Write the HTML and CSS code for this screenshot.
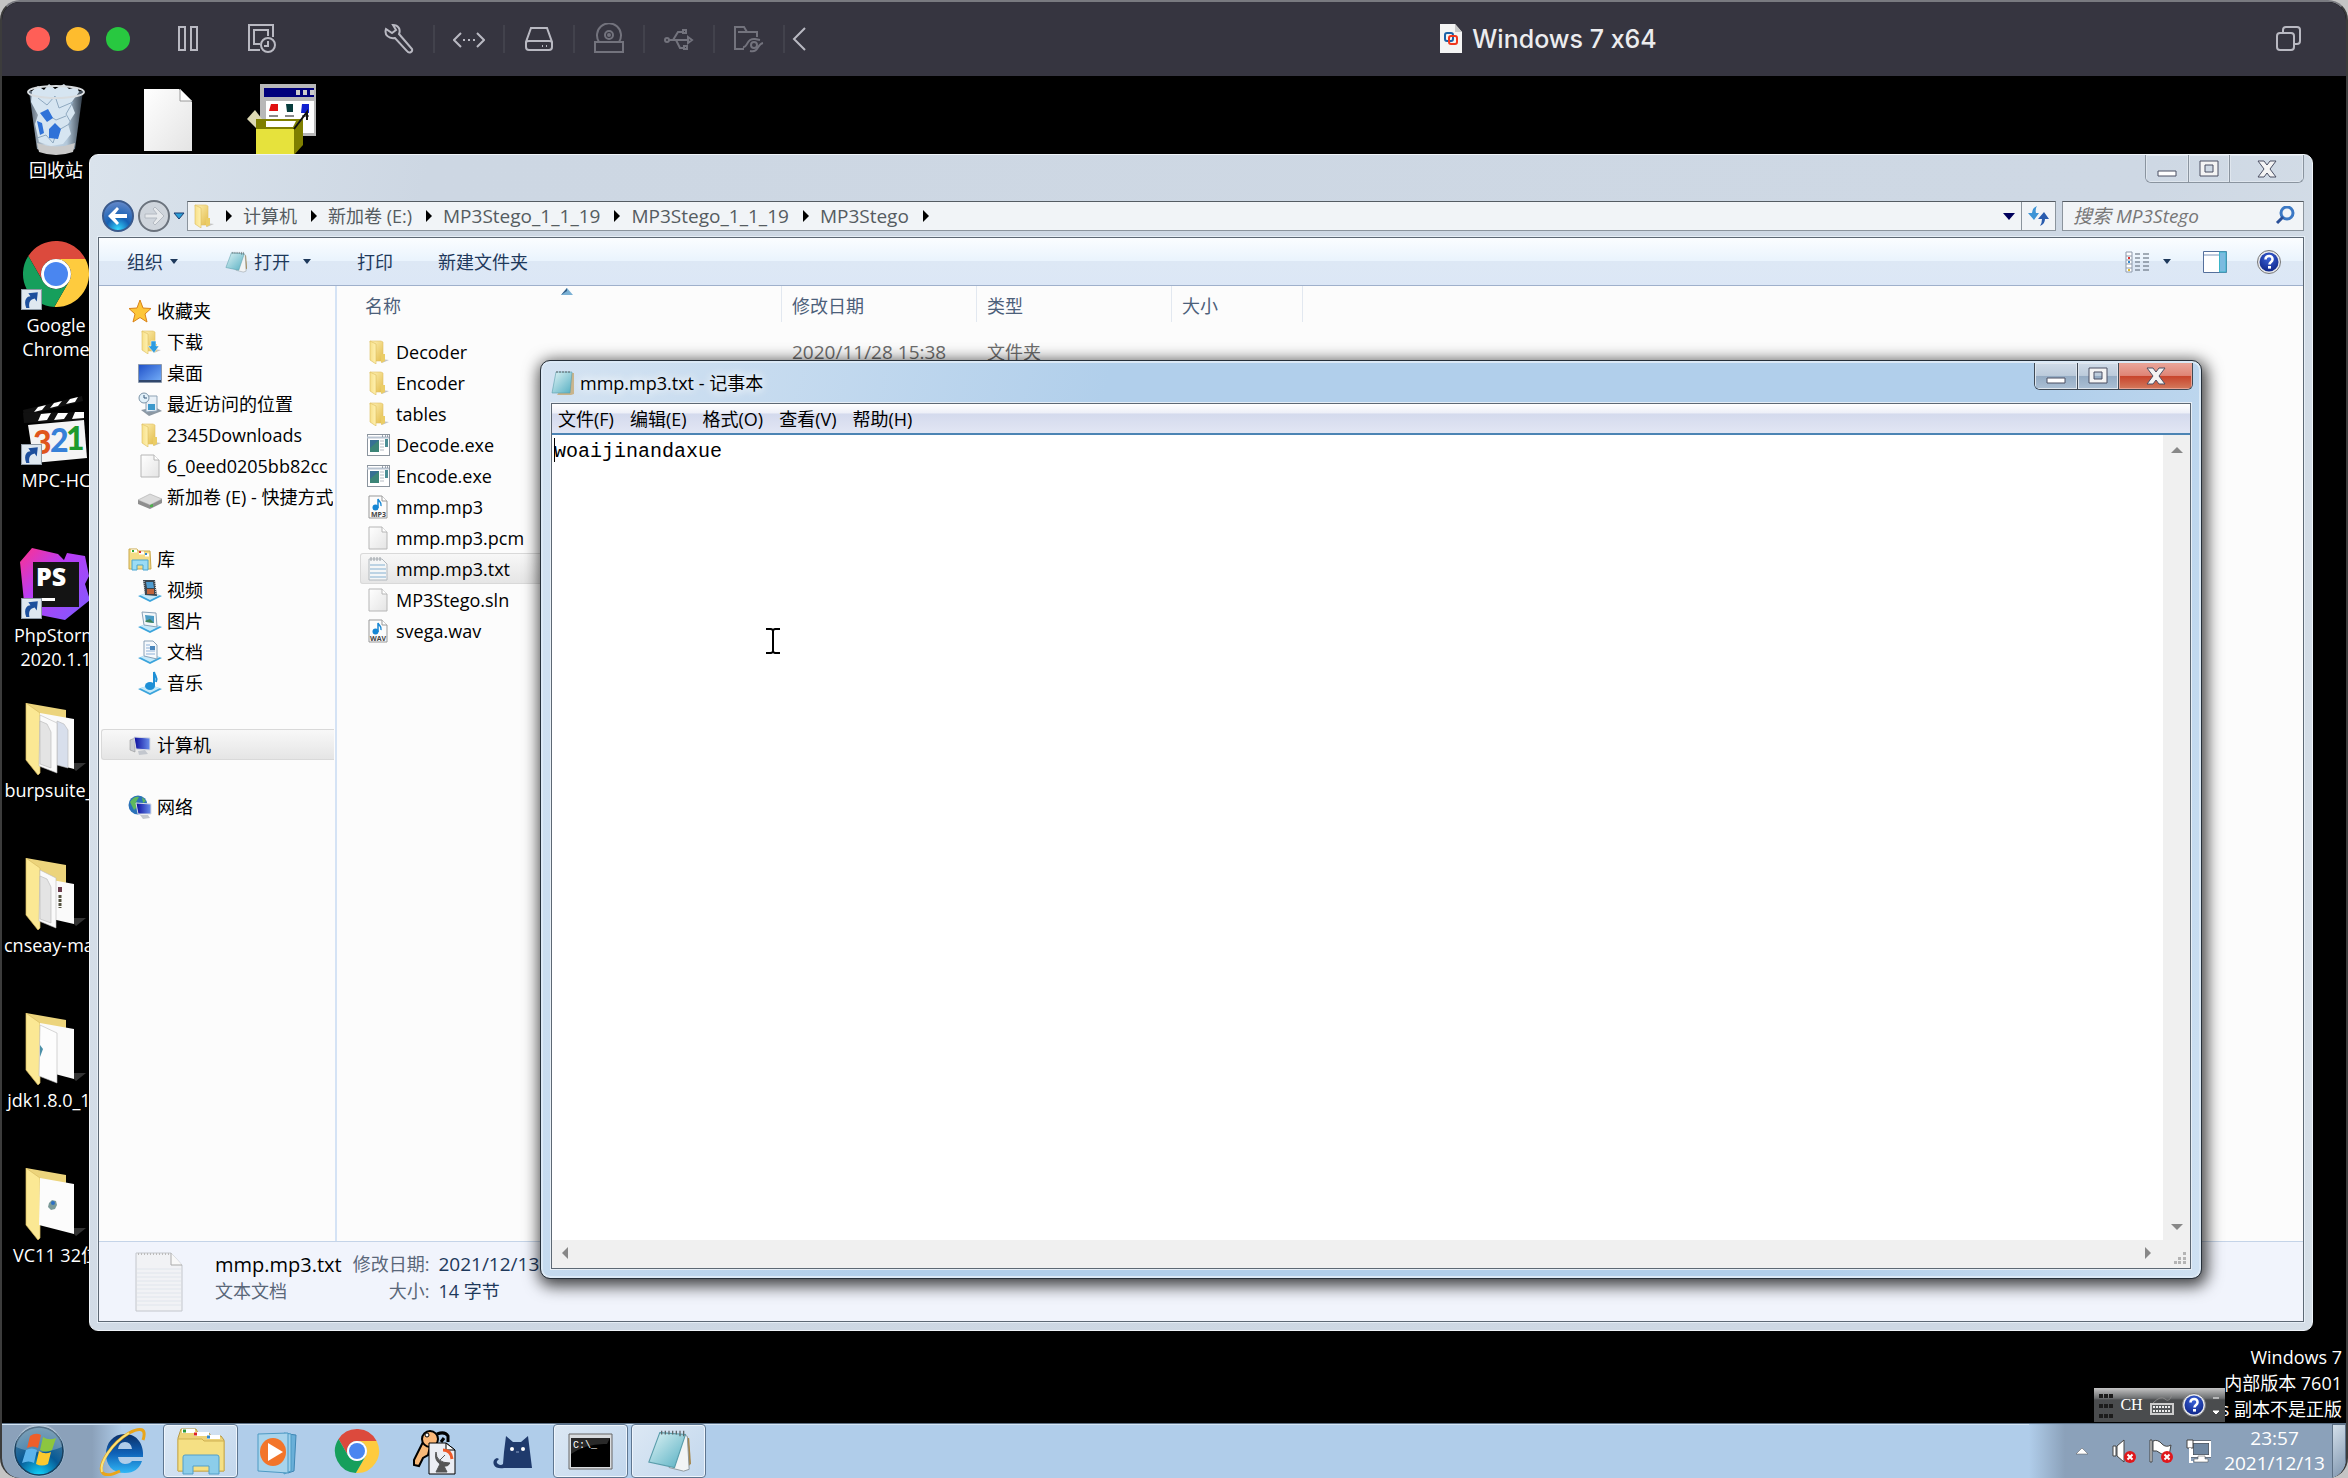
FILE: index.html
```html
<!DOCTYPE html>
<html lang="zh-CN">
<head>
    <meta charset="utf-8">
    <title>Windows 7 x64</title>
    <link rel="stylesheet" href="styles.css">
</head>
<body>
    <!-- shared icons -->
    <svg class="defs" width="0" height="0">
        <defs>
            <linearGradient id="gFolder" x1="0" y1="0" x2="1" y2="1"><stop offset="0" stop-color="#fff2b8"/><stop offset="1" stop-color="#e3bd4c"/></linearGradient>
            <linearGradient id="gFront" x1="0" y1="0" x2="1" y2="0"><stop offset="0" stop-color="#f7e08a"/><stop offset="1" stop-color="#fff1b0"/></linearGradient>
            <linearGradient id="gPage" x1="0" y1="0" x2="1" y2="1"><stop offset="0" stop-color="#ffffff"/><stop offset="1" stop-color="#e4e4e4"/></linearGradient>
            <linearGradient id="gNote" x1="0" y1="0" x2="1" y2="1"><stop offset="0" stop-color="#dff3f5"/><stop offset="1" stop-color="#55afc2"/></linearGradient>
            <linearGradient id="gBlue" x1="0" y1="0" x2="1" y2="1"><stop offset="0" stop-color="#1f50c8"/><stop offset="1" stop-color="#78b2fa"/></linearGradient>
            <linearGradient id="gScreen" x1="0" y1="0" x2="1" y2="0"><stop offset="0" stop-color="#0a0a9c"/><stop offset="1" stop-color="#6a90ec"/></linearGradient>
            <radialGradient id="gBack" cx=".5" cy=".95" r=".9"><stop offset="0" stop-color="#35dcff"/><stop offset=".45" stop-color="#1560b4"/><stop offset="1" stop-color="#5f86c8"/></radialGradient>
            <radialGradient id="gOrb" cx=".5" cy="1" r="1"><stop offset="0" stop-color="#12d8ff"/><stop offset=".45" stop-color="#075a96"/><stop offset="1" stop-color="#54819f"/></radialGradient>
            <radialGradient id="gHelp" cx=".5" cy=".3" r=".8"><stop offset="0" stop-color="#3a62d8"/><stop offset="1" stop-color="#0a1f80"/></radialGradient>
            <linearGradient id="gStorm" x1="0" y1="0" x2="1" y2="1"><stop offset="0" stop-color="#ff318c"/><stop offset=".4" stop-color="#b83df5"/><stop offset="1" stop-color="#7b5cff"/></linearGradient>
            <linearGradient id="gBin" x1="0" y1="0" x2="1" y2="0"><stop offset="0" stop-color="#54616f"/><stop offset=".3" stop-color="#c9d8e6"/><stop offset=".7" stop-color="#b3c8da"/><stop offset="1" stop-color="#2f3a46"/></linearGradient>
            <linearGradient id="gIe" x1="0" y1="0" x2="0" y2="1"><stop offset="0" stop-color="#0b2f66"/><stop offset=".5" stop-color="#0f62b8"/><stop offset="1" stop-color="#31b7f6"/></linearGradient>
        </defs>
        <symbol id="folder" viewBox="0 0 24 24">
            <path d="M15 19l8 1-7 3z" fill="#c4c4c4"/>
            <path d="M4 1h11l2 1v19H8z" fill="url(#gFolder)" stroke="#e0c164" stroke-width=".6"/>
            <path d="M4 1l6 3v20l-6-4z" fill="url(#gFront)" stroke="#dcbc5c" stroke-width=".6"/>
            <path d="M15 14h4v7l-4 2z" fill="#ebcd66"/>
        </symbol>
        <symbol id="page" viewBox="0 0 24 24">
            <path d="M3 1h13l5 5v17H3z" fill="url(#gPage)" stroke="#b6b6b6"/>
            <path d="M16 1v5h5" fill="#fff" stroke="#b6b6b6"/>
        </symbol>
        <symbol id="txt" viewBox="0 0 24 24">
            <path d="M3 2h13l5 5v16H3z" fill="#f4f6f7" stroke="#b2b8bd"/>
            <path d="M4 8h15M4 12h16M4 16h16M4 20h16" stroke="#bcd3e4" stroke-width="2"/>
            <path d="M5 0v4M8 0v4M11 0v4M14 0v4" stroke="#9aa0a6"/>
        </symbol>
        <symbol id="exe" viewBox="0 0 24 24">
            <rect x="1.500" y="1.500" width="22" height="21" fill="#fff" stroke="#8b949e"/>
            <path d="M1 4.500h22" stroke="#b8c3d0" stroke-width="2"/>
            <path d="M16 3h1M19 3h1M21 3h1" stroke="#456"/>
            <path d="M4 7h9v12H4z" fill="#3c8577"/><path d="M4 7h9L4 15z" fill="#35669f" opacity=".7"/>
            <path d="M14 8h4M14 11h4M14 14h4M14 17h4" stroke="#b6bcc4"/><path d="M19 6h3v8h-3z" fill="#4c8f96"/>
        </symbol>
        <symbol id="audio" viewBox="0 0 24 24">
            <path d="M3 1h13l5 5v17H3z" fill="#fcfcfc" stroke="#999"/>
            <path d="M16 1v5h5" fill="#fff" stroke="#999"/>
            <circle cx="9.500" cy="12.500" r="3" fill="#1686d4"/>
            <path d="M12 13V4c1 3 4 3 3 7" fill="none" stroke="#1686d4" stroke-width="1.500"/>
        </symbol>
        <symbol id="notebook" viewBox="0 0 24 24">
            <path d="M20 4l3 1 1 14-4 4z" fill="#a5854a"/>
            <path d="M20 3l2 1 1 18-3 1-8-2z" fill="#f2f4f5" stroke="#8a9498" stroke-width=".5"/>
            <path d="M7 2l14 1-6 18-14-3z" fill="url(#gNote)" stroke="#5a9dab" stroke-width=".6"/>
            <path d="M8 3V1M10 3V1M12 3V1M14 3V1M16 3V1M18 4V1M20 4V1" stroke="#5c6468" stroke-width=".7"/>
        </symbol>
        <symbol id="pad" viewBox="0 0 24 26">
            <path d="M21 3h2v21l-3 1H6z" fill="#c8b48c"/>
            <path d="M5 2h16l-2 21H1z" fill="url(#gNote)" stroke="#5a9dab" stroke-width=".6"/>
            <path d="M6 3V1M9 3V1M12 3V1M15 3V1M18 3V1" stroke="#5c6468"/>
        </symbol>
        <symbol id="shortcut" viewBox="0 0 20 20">
            <path d="M.5.500h19v19H.5z" fill="#dfe8f0" stroke="#8f9aa5"/>
            <path d="M5 18C2 10 6 7 9 7L7 4l9-1-1 9-2-3c-4 1-6 3-5 9z" fill="#1d4f9c"/>
        </symbol>
        <symbol id="chrome" viewBox="0 0 72 72">
            <path d="M36 21H65.400A33 33 0 0 0 8.300 18L23 43.500A15 15 0 0 1 36 21Z" fill="#dc4a3d"/>
            <path d="M36 21H65.400A33 33 0 0 0 8.300 18L23 43.500A15 15 0 0 1 36 21Z" fill="#fecb3e" transform="rotate(120 36 36)"/>
            <path d="M36 21H65.400A33 33 0 0 0 8.300 18L23 43.500A15 15 0 0 1 36 21Z" fill="#169f5c" transform="rotate(240 36 36)"/>
            <circle cx="36" cy="36" r="15" fill="#fff"/><circle cx="36" cy="36" r="12" fill="#4a86f0"/>
        </symbol>
        <symbol id="bigfolder" viewBox="0 0 72 72">
            <path d="M48 60l18 0-10 8z" fill="#333"/>
            <path d="M6 0l40 7v20l-34 6z" fill="#ecd47c"/>
            <path d="M6 0l14 10v60l-2 2L6 57z" fill="#fbe894" stroke="#d9bc62" stroke-width=".7"/>
        </symbol>
        <symbol id="tray" viewBox="0 0 24 24">
            <path d="M0 18l12-4 12 4-12 6z" fill="#3ba4dc"/><path d="M2 17l10-3 10 3-10 5z" fill="#c4e9fa"/>
        </symbol>
        <symbol id="closex" viewBox="0 0 20 18">
            <path d="M1 1h6l3 4 3-4h6l-6 8 6 8h-6l-3-4-3 4H1l6-8z" fill="#f4f4f4" stroke="#4a4f63"/>
        </symbol>
        <symbol id="help" viewBox="0 0 24 24">
            <circle cx="12" cy="12" r="11.500" fill="#e6e8ec" stroke="#777"/>
            <circle cx="12" cy="12" r="9.500" fill="url(#gHelp)"/>
            <path d="M8.500 9.500c0-5 7.500-4.500 7 0 0 2.500-3 2.500-3 5" fill="none" stroke="#fff" stroke-width="2.600"/><path d="M11 16h3v2.600h-3z" fill="#fff"/>
        </symbol>
    </svg>

    <div class="vm">
        <header class="vm-bar">
            <div class="lights">
                <button class="light red" aria-label="关闭"></button>
                <button class="light yellow" aria-label="最小化"></button>
                <button class="light green" aria-label="缩放"></button>
            </div>
            <button class="vm-btn pause" aria-label="暂停"><svg width="28" height="30" viewBox="0 0 28 30"><path d="M5 3h6v23H5zM17 3h6v23h-6z"/></svg></button>
            <button class="vm-btn snap" aria-label="快照"><svg width="28" height="30" viewBox="0 0 28 30"><path d="M25 13V1H1v25h11M12 20H6V6h14v6M12 26H8"/><circle cx="20" cy="21" r="7"/><path d="M20 17v5h-4"/></svg></button>
            <div class="tools">
                <button class="vm-btn tool" aria-label="设置"><svg width="30" height="30" viewBox="0 0 30 30"><path d="M9 1c5 0 8 4 6 9l13 15c1 3-3 5-5 2L11 14C5 15 0 11 2 5l6 4 4-3z"/></svg></button>
                <button class="vm-btn tool" aria-label="网络"><svg width="32" height="30" viewBox="0 0 32 30"><path d="M8 9l-7 7 7 7M24 9l7 7-7 7"/><path d="M10 16h2M15 16h2M20 16h2"/></svg></button>
                <button class="vm-btn tool" aria-label="硬盘"><svg width="30" height="30" viewBox="0 0 30 30"><path d="M7 4h16l5 14v5q0 3-3 3H5q-3 0-3-3v-5zM2 18q1-1 3-1h20q2 0 3 1M18 22h1M22 22h1"/></svg></button>
                <button class="vm-btn tool dim" aria-label="光驱"><svg width="30" height="32" viewBox="0 0 30 32"><path d="M5 19a12 12 0 1 1 20 0M1 19h28v10H1z"/><circle cx="15" cy="12" r="4"/><circle cx="15" cy="12" r="1"/></svg></button>
                <button class="vm-btn tool dim" aria-label="USB"><svg width="30" height="30" viewBox="0 0 30 30"><circle cx="3" cy="16" r="2"/><path d="M5 16h20M24 13l4 3-4 3zM9 16l5-8h5M12 16l4 8h5M19 6h3v3h-3zM20 22h3v3h-3z"/></svg></button>
                <button class="vm-btn tool dim" aria-label="共享文件夹"><svg width="30" height="30" viewBox="0 0 30 30"><path d="M10 25H1V3h9l3 5h10v5M4 8h19M9 23c5 1 3-9 12-8l5 1M16 27c9 2 7-7 13-8"/><circle cx="20" cy="21" r="3"/></svg></button>
                <button class="vm-btn more" aria-label="更多"><svg width="14" height="28" viewBox="0 0 14 28"><path d="M13 3L2 14l11 11"/></svg></button>
            </div>
            <h1 class="vm-title"><svg width="24" height="30" viewBox="0 0 24 30"><path d="M1 0h15l7 8v21H1z" fill="#f4f4f4"/><path d="M16 0v8h7z" fill="#c8c8c8"/><rect x="6" y="9" width="8" height="8" rx="2" fill="none" stroke="#1c62a8" stroke-width="2"/><rect x="10" y="12" width="8" height="8" rx="2" fill="none" stroke="#f0361d" stroke-width="2"/></svg>Windows 7 x64</h1>
            <button class="vm-btn" aria-label="窗口"><svg width="26" height="28" viewBox="0 0 26 28"><rect x="1" y="8" width="17" height="17" rx="3"/><path d="M7 7V5q0-3 3-3h11q3 0 3 3v11q0 3-3 3h-2"/></svg></button>
        </header>

        <main class="desktop">
            <div class="icons">
                <div class="shortcut"><svg width="72" height="72" viewBox="0 0 72 72"><path d="M9 8h54l-8 58q-19 9-38 0z" fill="url(#gBin)"/><path d="M12 8l6-5 6 4 5-6 6 5 9-5 5 5 8-2 2 5-8 11 4 10-7 11 3 10-8 10-12 2-12-4-4-18 3-9-7-13z" fill="#d6e5f1"/><path d="M18 15l9 7 8-9 4 12 14-6-7 12 5 9-14 8-4 12-7-8-9 3M25 30l11 7 10-4" stroke="#8fa9c0" fill="none"/><path d="M20 30l8-4 5 9-6 4zM29 46l6-6 6 6-3 10-9-1zM17 38l5 2 2 10-4 2z" fill="#2f72d8"/><ellipse cx="36" cy="9" rx="28" ry="6" fill="none" stroke="#d8dcdf" stroke-width="2"/><path d="M17 60q19 7 38 0l-2 9q-17 6-34 0z" fill="#c9c9c9"/></svg><span>回收站</span></div>
                <div class="shortcut"><svg width="72" height="72" viewBox="0 0 72 72"><use href="#chrome"/><use href="#shortcut" x="1" y="51" width="21" height="21"/></svg><span>Google<br>Chrome</span></div>
                <div class="shortcut"><svg width="72" height="72" viewBox="0 0 72 72"><path d="M3 17L62 3l1 5L4 23z" fill="#111"/><path d="M18 14l8-2-4 5-8 2zM34 10l8-2-4 5-8 2zM50 6l8-2-3 5-9 2z" fill="#fff"/><path d="M3 20l61-1v8L4 30z" fill="#111"/><path d="M21 21l10-1-4 7-9 1zM38 20h10l-4 6-10 1zM55 19h9v6l-12 1z" fill="#fff"/><path d="M8 32l56-5 3 38-53 5z" fill="#f4f4f4"/><g font-family="Lato, sans-serif" font-weight="900" font-size="32"><text x="13" y="61" fill="#e0551c">3</text><text x="30" y="59" fill="#3780d8">2</text><text x="46" y="57" fill="#1d9a2c">1</text></g><use href="#shortcut" x="1" y="51" width="21" height="21"/></svg><span>MPC-HC</span></div>
                <div class="shortcut"><svg width="72" height="72" viewBox="0 0 72 72"><path d="M0 14L12 0l26 6 6 6 3-7 18 3 4 20-4 8 5 16-25 20-40-8z" fill="url(#gStorm)"/><path d="M13 14h46v45H13z" fill="#141414"/><text x="16" y="38" font-family="Open Sans, sans-serif" font-weight="800" font-size="25" fill="#fff">PS</text><path d="M18 50h17v3H18z" fill="#fff"/><use href="#shortcut" x="1" y="50" width="21" height="21"/></svg><span>PhpStorm<br>2020.1.1</span></div>
                <div class="shortcut"><svg width="72" height="72" viewBox="0 0 72 72"><use href="#bigfolder" width="72" height="72"/><path d="M20 10l34 6v50l-34-9z" fill="#fafafa"/><path d="M37 18l7 3 4 6v38l-11-3z" fill="#d8dfec" stroke="#b5b5b5" stroke-width=".6"/><path d="M20 12l17 8v50l-18-7z" fill="#fafafa" stroke="#bbb" stroke-width=".6"/><path d="M20 18l7 3 4 8v36l-11-4z" fill="#e4e4e4" stroke="#b5b5b5" stroke-width=".6"/></svg><span>burpsuite_...</span></div>
                <div class="shortcut"><svg width="72" height="72" viewBox="0 0 72 72"><use href="#bigfolder" width="72" height="72"/><path d="M32 22l22 4v40l-22-5z" fill="#fafafa"/><path d="M40 29v5" stroke="#6c3b4c" stroke-width="4"/><path d="M40 37v13" stroke="#555340" stroke-width="3" stroke-dasharray="3 1"/><path d="M20 12l16 8v50l-17-7z" fill="#fafafa" stroke="#bbb" stroke-width=".6"/><path d="M20 18l7 3 4 8v36l-11-4z" fill="#e4e4e4" stroke="#b5b5b5" stroke-width=".6"/></svg><span>cnseay-ma...</span></div>
                <div class="shortcut"><svg width="72" height="72" viewBox="0 0 72 72"><use href="#bigfolder" width="72" height="72"/><path d="M20 10l34 6v50l-34-9z" fill="#fafafa"/><path d="M20 12l17 8v50l-18-7z" fill="#fdfdfd" stroke="#bbb" stroke-width=".6"/><path d="M20 32l3 4-3 8z" fill="#4c90a8"/></svg><span>jdk1.8.0_1...</span></div>
                <div class="shortcut"><svg width="72" height="72" viewBox="0 0 72 72"><use href="#bigfolder" width="72" height="72"/><path d="M20 10l34 6v50l-35-9z" fill="#fcfcfc"/><path d="M29 35l3-3 4 1 1 4-2 4-4 1-3-3z" fill="#7b9a98"/><circle cx="33" cy="35" r="2" fill="#2d70c4"/></svg><span>VC11 32位</span></div>
                <div class="shortcut"><svg width="72" height="72" viewBox="0 0 72 72"><path d="M12 6h35l13 13v49H12z" fill="url(#gPage)"/><path d="M48 6v12h12z" fill="#fff" stroke="#999"/></svg></div>
                <div class="shortcut third"><svg width="72" height="72" viewBox="0 0 72 72"><path d="M16 1h56v52H16z" fill="#b8b8b8"/><path d="M20 5h50v9H20z" fill="#00007c"/><path d="M52 7h4v5h-4zM59 7h4v5h-4zM66 7h4v5h-4z" fill="#ccc"/><path d="M22 18h48v32H22z" fill="#fff"/><path d="M27 21h7v7h-9z" fill="#e01010"/><path d="M42 21h7v8h-6z" fill="#063c3c"/><path d="M58 21h7v9h-8z" fill="#1020d0"/><path d="M25 33h9M41 33h9M58 33h7" stroke="#888" stroke-width="2"/><path d="M3 36l8-9 7 9-6 9z" fill="#ddd9b4"/><path d="M12 36h47l-10 12H12z" fill="#7f7f00"/><path d="M22 38h30l-3 6H22z" fill="#fff"/><path d="M12 46h38v26H12z" fill="#e6e23c"/><path d="M50 46l9-10v26l-9 10z" fill="#7f7f00"/><path d="M50 46l13-17v8" fill="none" stroke="#111" stroke-width="2"/></svg></div>
            </div>

            <p class="watermark">Windows 7<br>内部版本 7601<br>s 副本不是正版</p>

            <section class="window explorer">
                <div class="caption">
                    <button aria-label="最小化"><svg width="20" height="18" viewBox="0 0 20 18"><path d="M1 11h18v5H1z" fill="#fff" stroke="#4a4f63"/></svg></button>
                    <button aria-label="最大化"><svg width="20" height="18" viewBox="0 0 20 18"><path d="M1 1h18v15H1zM6 5v7h8V5z" fill="#f4f4f4" fill-rule="evenodd" stroke="#4a4f63"/></svg></button>
                    <button class="close" aria-label="关闭"><svg width="20" height="18"><use href="#closex"/></svg></button>
                </div>
                <nav class="address-row">
                    <div class="nav-btns">
                        <button aria-label="后退"><svg width="34" height="34" viewBox="0 0 34 34"><circle cx="17" cy="17" r="15" fill="url(#gBack)" stroke="#3a5a8c" stroke-width="2"/><path d="M7 17l9-9 2 2-4 5h12v4H14l4 5-2 2z" fill="#fff"/></svg></button>
                        <button aria-label="前进"><svg width="34" height="34" viewBox="0 0 34 34"><circle cx="17" cy="17" r="15" fill="#cfd5dc" stroke="#6b737d" stroke-width="2"/><path d="M27 17l-9-9-2 2 4 5H8v4h12l-4 5 2 2z" fill="#e6e9ec" stroke="#b4bac2"/></svg></button>
                        <button aria-label="历史"><svg width="12" height="8" viewBox="0 0 12 8"><path d="M1 1h10L6 7z" fill="#2b9fd8" stroke="#1c3c70"/></svg></button>
                    </div>
                    <div class="address">
                        <svg width="24" height="24"><use href="#folder"/></svg>
                        <a href="#">计算机</a>
                        <a href="#">新加卷 (E:)</a>
                        <a href="#" class="dir">MP3Stego_1_1_19</a>
                        <a href="#" class="dir">MP3Stego_1_1_19</a>
                        <a href="#" class="dir">MP3Stego</a>
                        <span class="end"></span>
                        <button class="drop" aria-label="以前的位置"><svg width="12" height="7" viewBox="0 0 12 7"><path d="M0 0h12L6 7z" fill="#00005c"/></svg></button>
                        <button class="refresh" aria-label="刷新"><svg width="22" height="22" viewBox="0 0 22 22"><path d="M9 1Q4 3 4 8H0l6 7 5-7H8Q7 4 9 1z" fill="#3d94d6"/><path d="M12 21q5-2 5-7h4l-5-7-6 7h4q0 4-2 7z" fill="#2a5cae"/></svg></button>
                    </div>
                    <div class="search">
                        <input type="text" placeholder="搜索 MP3Stego" aria-label="搜索 MP3Stego">
                        <svg width="20" height="20" viewBox="0 0 20 20"><circle cx="12" cy="7" r="6" fill="none" stroke="#3b78c4" stroke-width="3"/><path d="M8 11l-6 6" stroke="#2a4f98" stroke-width="3"/></svg>
                    </div>
                </nav>

                <div class="body">
                    <div class="toolbar">
                        <button class="arrow organize">组织</button>
                        <button class="arrow open"><svg width="24" height="22"><use href="#notebook"/></svg>打开</button>
                        <button class="print">打印</button>
                        <button>新建文件夹</button>
                        <button class="arrow view" aria-label="视图"><svg width="24" height="22" viewBox="0 0 24 22"><path d="M1 1h6v20H1zM1 5h6M1 9h6M1 13h6M1 17h6" fill="#fff" stroke="#8d99ab"/><path d="M3 7h2" stroke="#d33" stroke-width="2"/><path d="M3 11h2" stroke="#38c" stroke-width="2"/><path d="M3 19h2" stroke="#db3" stroke-width="2"/><path d="M10 3h5M18 3h6M10 7h5M18 7h6M10 11h5M18 11h6M10 15h5M18 15h6M10 19h5M18 19h6" stroke="#54606f"/></svg></button>
                        <button class="pane" aria-label="预览窗格"><svg width="24" height="22" viewBox="0 0 24 22"><path d="M.5.500h23v21H.5z" fill="#fff" stroke="#54709c"/><path d="M1 4h16" stroke="#7a93b8"/><path d="M16.500 1h6.500v20h-6.500z" fill="#7cbbe0" stroke="#3bb5c8"/></svg></button>
                        <button aria-label="帮助"><svg width="24" height="24"><use href="#help"/></svg></button>
                    </div>

                    <div class="panes">
                        <aside class="sidebar">
                            <ul>
                                <li><a href="#"><svg width="24" height="24" viewBox="0 0 24 24"><path d="M12 1l3 8 8 .500-6 5.500 2 8-7-4.500L5 23l2-8-6-5.500L9 9z" fill="#fdc638" stroke="#d98218"/></svg>收藏夹</a></li>
                                <li class="sub"><a href="#"><svg width="24" height="24"><use href="#folder"/><path d="M13 11h5v5h3l-5 7-6-7h3z" fill="#2d9be0" stroke="#fff" stroke-width=".5"/></svg>下载</a></li>
                                <li class="sub"><a href="#"><svg width="24" height="24" viewBox="0 0 24 24"><path d="M.5 3.500h23v18H.5z" fill="url(#gBlue)" stroke="#8a98ac"/><path d="M1 19h22v2H1z" fill="#30476c"/></svg>桌面</a></li>
                                <li class="sub"><a href="#"><svg width="24" height="24" viewBox="0 0 24 24"><path d="M3 18l14-3 7 4-13 5z" fill="#8c98a3"/><path d="M8 4h11v15l-11 1z" fill="#e8f0f7" stroke="#8fa3b5"/><path d="M10 12h7v6h-7z" fill="#3d99cc"/><circle cx="6" cy="6" r="5" fill="#e2f1fa" stroke="#7c94a8"/><path d="M6 3v3h3" stroke="#357" fill="none"/></svg>最近访问的位置</a></li>
                                <li class="sub"><a href="#"><svg width="24" height="24"><use href="#folder"/></svg>2345Downloads</a></li>
                                <li class="sub"><a href="#"><svg width="24" height="24"><use href="#page"/></svg>6_0eed0205bb82cc</a></li>
                                <li class="sub"><a href="#"><svg width="24" height="24" viewBox="0 0 24 24"><path d="M0 15l12-6 12 5-12 6z" fill="#dcdcdc" stroke="#aaa" stroke-width=".6"/><path d="M0 15l12 5 12-6v4l-12 6-12-5z" fill="#8e8e8e"/><path d="M12 20l3-1v3h-3z" fill="#4cb04c"/></svg>新加卷 (E) - 快捷方式</a></li>
                            </ul>
                            <ul>
                                <li><a href="#"><svg width="24" height="24" viewBox="0 0 24 24"><path d="M1 2h8l1 2h12l1 18H1z" fill="#f4dc86" stroke="#c9a84c"/><path d="M3 4h6M11 6h5M17 8h4" stroke="#fff" stroke-width="3"/><path d="M4 4h2" stroke="#3a3" stroke-width="2"/><path d="M11 5h2" stroke="#d33" stroke-width="2"/><path d="M17 7h2" stroke="#38c" stroke-width="2"/><path d="M4 13h16v10h-5v-5H9v5H4z" fill="#9bdcf4" stroke="#4aa6d0"/></svg>库</a></li>
                                <li class="sub"><a href="#"><svg width="24" height="24"><use href="#tray"/><path d="M5 2h12l2 16-12-1z" fill="#3b4650"/><path d="M8 4h7l1 6-7 0z" fill="#4f9cd0"/><path d="M9 11h7v5H9z" fill="#c0643c"/><path d="M6 3v14M17 3l1 14" stroke="#e8e8e8" stroke-dasharray="1 1"/></svg>视频</a></li>
                                <li class="sub"><a href="#"><svg width="24" height="24"><use href="#tray"/><path d="M4 3l14 1 1 14-13-2z" fill="#f3f7fa" stroke="#8aa2b8"/><path d="M7 6l9 1v7l-8-1z" fill="#4b9bc4"/><path d="M7 12l5-2 4 4-8-1z" fill="#3e8256"/></svg>图片</a></li>
                                <li class="sub"><a href="#"><svg width="24" height="24"><use href="#tray"/><path d="M6 1h9l4 4v14L6 16z" fill="#f6f9fc" stroke="#8aa2b8"/><path d="M8 5h4M8 8h9M8 11h9M8 14h9" stroke="#8db1d8"/><path d="M12 6h5v4h-5z" fill="#4b86bc"/></svg>文档</a></li>
                                <li class="sub"><a href="#"><svg width="24" height="24"><use href="#tray"/><ellipse cx="12" cy="15" rx="5" ry="4" fill="#1d8fd6"/><path d="M16 15V1c1 5 4 5 2 10" fill="none" stroke="#1d8fd6" stroke-width="2"/></svg>音乐</a></li>
                            </ul>
                            <ul>
                                <li class="current"><a href="#"><svg width="24" height="24" viewBox="0 0 24 24"><path d="M2 7l5-2v14l-5-2z" fill="#c9ccd2" stroke="#888" stroke-width=".5"/><path d="M6 4l16 1v12L8 16z" fill="url(#gScreen)" stroke="#d7dbe2"/><path d="M10 18l7-1 3 4-9 1z" fill="#c3c7ce"/></svg>计算机</a></li>
                            </ul>
                            <ul>
                                <li><a href="#"><svg width="24" height="24" viewBox="0 0 24 24"><circle cx="10" cy="10" r="9.500" fill="#2b72b8"/><path d="M2 7q4-6 9-5l-3 5 3 3-5 5zM14 2l4 4-3 2z" fill="#5fb85c"/><path d="M8 8l15 1v10L10 19z" fill="url(#gScreen)" stroke="#d7dbe2"/><path d="M12 20l8 0 2 3-7 1z" fill="#c3c7ce"/></svg>网络</a></li>
                            </ul>
                        </aside>

                        <div class="files">
                            <svg class="sort" width="12" height="7" viewBox="0 0 12 7"><path d="M0 7l6-7 6 7z" fill="#7ab0d4"/><path d="M0 7l6-7v3z" fill="#345f88"/></svg>
                            <table>
                                <colgroup><col class="c-name"><col class="c-date"><col class="c-type"><col class="c-size"><col></colgroup>
                                <thead><tr><th><span>名称</span></th><th><span>修改日期</span></th><th><span>类型</span></th><th><span>大小</span></th><th></th></tr></thead>
                                <tbody>
                                    <tr><td><svg width="24" height="24"><use href="#folder"/></svg>Decoder</td><td class="date">2020/11/28 15:38</td><td>文件夹</td><td></td></tr>
                                    <tr><td><svg width="24" height="24"><use href="#folder"/></svg>Encoder</td></tr>
                                    <tr><td><svg width="24" height="24"><use href="#folder"/></svg>tables</td></tr>
                                    <tr><td><svg width="24" height="24"><use href="#exe"/></svg>Decode.exe</td></tr>
                                    <tr><td><svg width="24" height="24"><use href="#exe"/></svg>Encode.exe</td></tr>
                                    <tr><td><svg width="24" height="24"><use href="#audio"/><text class="ext" x="5" y="22">MP3</text></svg>mmp.mp3</td></tr>
                                    <tr><td><svg width="24" height="24"><use href="#page"/></svg>mmp.mp3.pcm</td></tr>
                                    <tr class="selected"><td><svg width="24" height="24"><use href="#txt"/></svg>mmp.mp3.txt</td></tr>
                                    <tr><td><svg width="24" height="24"><use href="#page"/></svg>MP3Stego.sln</td></tr>
                                    <tr><td><svg width="24" height="24"><use href="#audio"/><text class="ext" x="4" y="22">WAV</text></svg>svega.wav</td></tr>
                                </tbody>
                            </table>
                        </div>
                    </div>

                    <footer class="details">
                        <svg width="48" height="62" viewBox="0 0 48 62"><path d="M1 2h35l11 12v46H1z" fill="#f1f2f5" stroke="#c3c6cc"/><path d="M2 18h44M2 22h44M2 26h44M2 30h44M2 34h44M2 38h44M2 42h44M2 46h44M2 50h44M2 54h44" stroke="#e0e5ec"/><path d="M36 2v12h11" fill="#f8f8f8" stroke="#aaa"/><path d="M3 3h32" stroke="#bbb" stroke-width="2" stroke-dasharray="1 2"/></svg>
                        <div class="d-name"><strong>mmp.mp3.txt</strong><span>文本文档</span></div>
                        <dl>
                            <dt>修改日期:</dt><dd class="date">2021/12/13</dd>
                            <dt>大小:</dt><dd>14 字节</dd>
                        </dl>
                    </footer>
                </div>
            </section>

            <section class="window notepad">
                <div class="caption">
                    <button aria-label="最小化"><svg width="20" height="18" viewBox="0 0 20 18"><path d="M1 11h18v5H1z" fill="#fff" stroke="#4a4f63"/></svg></button>
                    <button aria-label="最大化"><svg width="20" height="18" viewBox="0 0 20 18"><path d="M1 1h18v15H1zM6 5v7h8V5z" fill="#f4f4f4" fill-rule="evenodd" stroke="#4a4f63"/></svg></button>
                    <button class="close" aria-label="关闭"><svg width="20" height="18"><use href="#closex"/></svg></button>
                </div>
                <h2><svg width="24" height="26"><use href="#pad"/></svg><span>mmp.mp3.txt - 记事本</span></h2>
                <div class="body">
                    <div class="menu">
                        <button>文件(F)</button>
                        <button>编辑(E)</button>
                        <button>格式(O)</button>
                        <button>查看(V)</button>
                        <button>帮助(H)</button>
                    </div>
                    <div class="editor">
                        <textarea spellcheck="false" aria-label="文本">woaijinandaxue</textarea>
                        <div class="caret"></div>
                        <div class="vscroll">
                            <svg width="12" height="8" viewBox="0 0 12 8"><path d="M0 7l6-6 6 6z" fill="#888"/></svg>
                            <svg width="12" height="8" viewBox="0 0 12 8"><path d="M0 1h12L6 7z" fill="#888"/></svg>
                        </div>
                        <div class="hscroll">
                            <svg width="8" height="12" viewBox="0 0 8 12"><path d="M7 0v12L1 6z" fill="#888"/></svg>
                            <svg width="8" height="12" viewBox="0 0 8 12"><path d="M1 0v12l6-6z" fill="#888"/></svg>
                        </div>
                        <div class="grip"><svg width="12" height="12" viewBox="0 0 12 12"><path d="M0 9h3v3H0zM4 9h3v3H4zM9 9h3v3H9zM4 5h3v3H4zM9 5h3v3H9zM9 0h3v3H9z" fill="#b4b4b4"/></svg></div>
                    </div>
                </div>
            </section>

            <svg class="pointer" width="16" height="28" viewBox="0 0 16 28"><path d="M1 2h5l2 1 2-1h5M1 26h5l2-1 2 1h5M8 3v22" fill="none" stroke="#000" stroke-width="2"/></svg>

            <div class="langbar">
                <svg width="16" height="26" viewBox="0 0 16 26"><path d="M1 4h14M1 14h14M1 24h14" stroke="#1c1c1c" stroke-width="4" stroke-dasharray="4 1"/></svg>
                <span>CH</span>
                <svg width="26" height="22" viewBox="0 0 26 22"><path d="M4 9q8-8 12-4t7-4" fill="none" stroke="#888"/><path d="M2 10h22v10H2z" fill="#55585a" stroke="#ccc" stroke-width="2"/><path d="M4 13h18M4 17h18" stroke="#eee" stroke-width="2" stroke-dasharray="2 1"/></svg>
                <svg width="24" height="24"><use href="#help"/></svg>
                <svg width="8" height="20" viewBox="0 0 8 20"><path d="M1 3h6M1 16h6l-3 3z" stroke="#fff" fill="#fff"/></svg>
            </div>
        </main>

        <footer class="taskbar">
            <button class="orb" aria-label="开始"><svg width="52" height="52" viewBox="0 0 52 52"><circle cx="26" cy="26" r="25" fill="url(#gOrb)" stroke="#a9c3d8"/><circle cx="26" cy="26" r="24" fill="none" stroke="#1b405f" stroke-width="1.500"/><path d="M3 22a23 23 0 0 1 46 0q-23 10-46 0z" fill="#fff" opacity=".25"/><path d="M17 11q6-4 11-1l-3 13q-5-3-11 0z" fill="#ee5f2b"/><path d="M30 12q6 4 13 1l-4 12q-6 3-12 0z" fill="#8cc63f"/><path d="M13 25q6-3 11 0l-3 13q-5-3-12 0z" fill="#5cb4ec"/><path d="M26 26q6 4 12 1l-3 12q-6 3-12 0z" fill="#fdc92e"/></svg></button>
            <button aria-label="Internet Explorer"><svg width="50" height="50" viewBox="0 0 50 50"><path d="M45 31H20q1 7 7 7 5 0 7-3h10q-4 12-17 12C14 47 8 39 8 28 8 17 15 8 27 8s19 10 18 23zM20 23h14q-1-7-7-7t-7 7z" fill="url(#gIe)" fill-rule="evenodd"/><path d="M45 14C49 2 42 1 31 7 14 17 0 38 4 46c3 5 12 2 18-1" fill="none" stroke="#e9a51b" stroke-width="3"/><path d="M31 7C14 17 1 37 4 46" fill="none" stroke="#f9e27a" stroke-width="2"/></svg></button>
            <button class="running" aria-label="资源管理器"><svg width="50" height="50" viewBox="0 0 50 50"><path d="M2 12l3-9h15l2 4h11l2 3h10l3 4v31H2z" fill="#ecd277" stroke="#b89a44"/><path d="M6 5h13M18 8h15M31 11h13" stroke="#fff" stroke-width="4"/><path d="M7 5h3" stroke="#2c9a3c" stroke-width="3"/><path d="M18 8h3" stroke="#d22" stroke-width="3"/><path d="M31 11h3" stroke="#38c" stroke-width="3"/><path d="M2 13h24l2 2h20v30H2z" fill="#f5e084" stroke="#cfb050"/><path d="M7 48V31q0-2 2-2h32q2 0 2 2v17H33v-8H17v8z" fill="#8ccdea" stroke="#539fc8"/></svg></button>
            <button aria-label="媒体播放器"><svg width="50" height="50" viewBox="0 0 50 50"><path d="M34 8l8 1-2 36-6 2z" fill="#69afd8" stroke="#3f86b4"/><path d="M30 7l7 1v37l-7 3z" fill="#9cd0ec" stroke="#4d9ac4"/><path d="M4 8l30-1v40L4 45z" fill="#a8d4ec" stroke="#4d9ac4"/><ellipse cx="19" cy="26" rx="13" ry="14" fill="#f3752a"/><path d="M14 17v18l15-9z" fill="#fff"/></svg></button>
            <button aria-label="Chrome"><svg width="48" height="48"><use href="#chrome"/></svg></button>
            <button aria-label="密钥工具"><svg width="50" height="50" viewBox="0 0 50 50"><path d="M14 14L4 34v5l5 1 4-8 5-3 3-12z" fill="#f8b978" stroke="#000" stroke-width="2"/><circle cx="20" cy="13" r="8" fill="#fcb878" stroke="#000" stroke-width="2"/><circle cx="17" cy="9" r="2" fill="#fff" stroke="#000"/><path d="M19 17h17l9 7v24H19z" fill="#eceef4" stroke="#000"/><path d="M36 17v7h9z" fill="#fff" stroke="#000"/><path d="M27 8q8-3 11 2v6M31 16l3-4" stroke="#000" stroke-width="3" fill="none"/><path d="M33 24q8 0 9 9" stroke="#ee5a28" stroke-width="3" fill="none"/><path d="M26 26q0 11 14 11-2 4-6 3l3 6H26l4-8q-6-4-4-12zM30 34l5-5" stroke="#555" fill="#555"/></svg></button>
            <button aria-label="Clash"><svg width="50" height="50" viewBox="0 0 50 50"><path d="M18 10l7 6h8l7-6 4 32H16q-8 1-10-3-2-5 3-7l2 1q-4 3-1 5 3 2 5 0l1-12z" fill="#1f3a6c"/><circle cx="24" cy="23" r="2" fill="#fff"/><circle cx="35" cy="23" r="2" fill="#fff"/><path d="M28 26h3" stroke="#8fa4c8"/></svg></button>
            <button class="running" aria-label="命令提示符"><svg width="50" height="50" viewBox="0 0 50 50"><path d="M3 8h43v35H3z" fill="#d9dcdf" stroke="#666"/><path d="M5 12h39v29H5z" fill="#000"/><path d="M5 28q16-11 36-10l3-6H5z" fill="#444" opacity=".6"/><text x="7" y="22" font-family="Liberation Mono, monospace" font-size="10" fill="#fff">C:\_</text></svg></button>
            <button class="running" aria-label="记事本"><svg width="46" height="44"><use href="#notebook"/></svg></button>
            <div class="notify">
                <svg width="14" height="8" viewBox="0 0 14 8"><path d="M1 7l6-6 6 6z" fill="#fff" stroke="#555" stroke-width=".5"/></svg>
                <svg width="24" height="24" viewBox="0 0 24 24"><path d="M1 7h3v10H1zM5 7l7-6v22l-7-6z" fill="#fff" stroke="#444"/><circle cx="18" cy="18" r="6" fill="#e0181c"/><path d="M15.500 15.500l5 5M20.500 15.500l-5 5" stroke="#fff" stroke-width="2"/></svg>
                <svg width="24" height="24" viewBox="0 0 24 24"><path d="M1 1h2v22H1z" fill="#fff" stroke="#444"/><path d="M4 2q5-2 9 3 4 4 9 1l-2 11q-5 0-9-3-3-3-7-2z" fill="#fff" stroke="#444"/><circle cx="18" cy="18" r="6" fill="#e0181c"/><path d="M15.500 15.500l5 5M20.500 15.500l-5 5" stroke="#fff" stroke-width="2"/></svg>
                <svg width="25" height="24" viewBox="0 0 25 24"><path d="M6 3h18v14H6z" fill="#7088a2" stroke="#444" stroke-width="3"/><path d="M6 3h18v14H6z" fill="none" stroke="#fff" stroke-width="2"/><path d="M12 17h7v3h3v3H8v-3h4z" fill="#fff" stroke="#444" stroke-width=".5"/><path d="M1 1h6v8H1z" fill="#fff" stroke="#444"/><path d="M4 9v14h3" fill="none" stroke="#fff" stroke-width="2"/></svg>
                <time>23:57<br>2021/12/13</time>
                <button class="show-desktop" aria-label="显示桌面"></button>
            </div>
        </footer>
    </div>
</body>
</html>
```

FILE: styles.css
```css
* {
    box-sizing: border-box;
}
body {
    margin: 0;
    height: 100vh;
    background: #c4c4c4;
    font: 18px/24px "Open Sans", "Noto Sans CJK SC", sans-serif;
    color: #000;
}
button {
    border: 0;
    padding: 0;
    background: none;
    font: inherit;
    color: inherit;
}
a {
    color: inherit;
    text-decoration: none;
}
svg {
    display: block;
    flex: none;
}
.defs {
    position: absolute;
}
.vm {
    height: 100%;
    display: flex;
    flex-direction: column;
    border-radius: 20px;
    border: 2px solid #3c3c3c;
    border-top-color: #797a80;
    border-bottom: 0;
    overflow: hidden;
    background: #000;
}

/* host title bar */
.vm-bar {
    height: 74px;
    flex: none;
    display: flex;
    align-items: center;
    padding: 0 44px 0 24px;
    background: #363540;
}
.lights {
    display: flex;
    gap: 16px;
}
.light {
    width: 24px;
    height: 24px;
    border-radius: 50%;
}
.red { background: #ff5f57; }
.yellow { background: #febc2e; }
.green { background: #28c840; }
.vm-btn svg {
    fill: none;
    stroke: #b9b9c2;
    stroke-width: 2;
}
.vm-btn.dim svg {
    stroke: #73737d;
}
.pause {
    margin-left: 44px;
}
.snap {
    margin-left: 46px;
}
.tools {
    display: flex;
    margin-left: 89px;
}
.tool {
    width: 70px;
    height: 28px;
    display: flex;
    align-items: center;
    justify-content: center;
    border-right: 2px solid #42424c;
}
.more {
    margin-left: 7px;
}
.vm-title {
    flex: 1;
    margin: 0;
    padding-left: 14px;
    display: flex;
    justify-content: center;
    align-items: center;
    gap: 9px;
    font: 500 25px/32px Inter, sans-serif;
    font-variant-ligatures: no-contextual;
    color: #ececee;
}

/* guest desktop */
.desktop {
    flex: 1;
    position: relative;
    min-height: 0;
    color: #fff;
}
.icons {
    display: grid;
    grid-auto-flow: column;
    grid-template-rows: repeat(8, 155px);
    grid-auto-columns: 112px;
    padding-top: 7px;
    margin-left: -2px;
}
.shortcut {
    display: flex;
    flex-direction: column;
    align-items: center;
    gap: 3px;
    text-align: center;
    white-space: nowrap;
}
.third {
    grid-area: 1 / 3;
}
.watermark {
    position: absolute;
    right: 4px;
    bottom: 1px;
    margin: 0;
    line-height: 26px;
    text-align: right;
}
.date {
    font-size: 19px;
}

.window {
    position: absolute;
    display: flex;
    flex-direction: column;
    border-radius: 9px;
    color: #000;
}
.window .body {
    flex: 1;
    min-height: 0;
    display: flex;
    flex-direction: column;
    border: 1px solid #5d6874;
    box-shadow: 0 0 0 1px #e6eef6;
}
.caption {
    position: absolute;
    top: 0;
    right: 8px;
    display: flex;
    height: 28px;
    border: 1px solid #8a949f;
    border-top: 0;
    border-radius: 0 0 6px 6px;
    overflow: hidden;
}
.caption button {
    width: 43px;
    display: flex;
    align-items: center;
    justify-content: center;
    border-right: 1px solid #8a949f;
    box-shadow: inset 0 0 0 1px #dfe6ee;
}
.caption button + button {
    width: 41px;
}
.caption .close.close {
    width: 73px;
    border: 0;
}

/* explorer */
.explorer {
    left: 87px;
    right: 33px;
    top: 78px;
    bottom: 92px;
    padding: 46px 8px 8px;
    border: 1px solid #eef3f8;
    background: linear-gradient(100deg, #dae3ec, #cdd7e3 14%, #ced8e4 85%, #d6dfe8);
}
.address-row {
    display: flex;
    align-items: center;
    height: 30px;
    margin-bottom: 6px;
}
.nav-btns {
    display: flex;
    align-items: center;
    gap: 2px;
    width: 89px;
    padding-left: 3px;
}
.address {
    flex: 1;
    height: 30px;
    display: flex;
    align-items: center;
    padding-left: 3px;
    border: 1px solid #8b949d;
    border-top-color: #555c63;
    background: #f1f4f7;
    color: #555c61;
}
.address a,
.address .end {
    display: flex;
    align-items: center;
    margin-right: 14px;
}
.address .dir {
    font-size: 19px;
}
.address a::before,
.address .end::before {
    content: "";
    border: 6px solid transparent;
    border-left-color: #000;
    border-right: 0;
    margin-right: 11px;
}
.address svg + a {
    margin-left: 11px;
}
.drop {
    margin-left: auto;
    padding-right: 6px;
}
.refresh {
    width: 34px;
    height: 28px;
    padding-left: 6px;
    border-left: 1px solid #8b949d;
}
.search {
    width: 242px;
    height: 30px;
    display: flex;
    align-items: center;
    margin-left: 6px;
    padding: 0 8px 0 10px;
    border: 1px solid #8b949d;
    border-top-color: #555c63;
    background: #f1f4f7;
}
.search input {
    flex: 1;
    min-width: 0;
    border: 0;
    padding: 0;
    background: none;
    font: italic 19px/24px "Open Sans", "Noto Sans CJK SC", sans-serif;
}
.search input::placeholder {
    color: #777;
}
.toolbar {
    flex: none;
    height: 48px;
    display: flex;
    align-items: center;
    padding: 0 22px 0 28px;
    border-bottom: 1px solid #9fb0cb;
    background: linear-gradient(#fbfdff, #eaf4fd 48%, #dde8f5 50%, #dce7f6);
    color: #1e395b;
}
.toolbar button {
    display: flex;
    align-items: center;
    gap: 6px;
}
.arrow::after {
    content: "";
    border: 4px solid transparent;
    border-top: 5px solid #1e395b;
    border-bottom: 0;
    margin-left: 1px;
}
.organize {
    margin-right: 46px;
}
.open {
    margin-right: 46px;
}
.open::after {
    margin-left: 7px;
}
.print {
    margin-right: 45px;
}
.view {
    margin-left: auto;
}
.view::after {
    margin-left: 8px;
}
.pane {
    margin: 0 30px 0 32px;
}
.panes {
    flex: 1;
    min-height: 0;
    display: flex;
    background: #fcfcfc;
}
.sidebar {
    width: 238px;
    flex: none;
    padding: 9px 1px 0 2px;
    border-right: 2px solid #d5e3f5;
}
.sidebar ul {
    list-style: none;
    margin: 0 0 31px;
    padding: 0;
}
.sidebar li {
    height: 31px;
    padding-left: 26px;
    border: 1px solid transparent;
    overflow: hidden;
    white-space: nowrap;
}
.sidebar .sub {
    padding-left: 36px;
}
.sidebar a {
    display: flex;
    align-items: center;
    gap: 5px;
    height: 29px;
}
.current,
.selected td {
    background: linear-gradient(#f8f8f8, #e5e5e5);
}
.sidebar .current {
    border-color: #d9d9d9;
    border-right: 0;
    border-radius: 3px 0 0 3px;
}
.files {
    flex: 1;
    min-width: 0;
    position: relative;
    padding-left: 23px;
}
.sort {
    position: absolute;
    left: 224px;
    top: 2px;
}
table {
    width: 100%;
    table-layout: fixed;
    border-collapse: collapse;
}
.c-name { width: 422px; }
.c-date { width: 195px; }
.c-type { width: 195px; }
.c-size { width: 131px; }
th {
    height: 50px;
    padding: 0;
    vertical-align: top;
    text-align: left;
    font-weight: normal;
    color: #4c607a;
}
th span {
    display: block;
    height: 36px;
    padding: 8px 0 0 10px;
    border-right: 1px solid #e2e8f0;
}
th:first-child span {
    padding-left: 5px;
}
td {
    height: 31px;
    padding: 0 0 0 10px;
    color: #6d6d6d;
}
td:first-child {
    display: flex;
    align-items: center;
    gap: 6px;
    padding-left: 6px;
    color: #000;
}
.selected td {
    box-shadow: inset 0 0 0 1px #d9d9d9;
    border-radius: 3px;
}
.ext {
    font: bold 7px "Open Sans", sans-serif;
    fill: #444;
}
.details {
    flex: none;
    height: 80px;
    display: flex;
    padding: 9px 0 0 36px;
    border-top: 1px solid #c5d4e8;
    background: #f1f4fc;
    line-height: 27px;
    color: #5a6779;
    white-space: nowrap;
}
.d-name {
    display: flex;
    flex-direction: column;
    margin: 0 11px 0 32px;
}
.d-name strong {
    font-weight: normal;
    font-size: 20px;
    color: #000;
}
.details dl {
    display: grid;
    grid-template-columns: auto auto;
    grid-auto-rows: 27px;
    column-gap: 9px;
    margin: 0;
}
.details dt {
    text-align: right;
}
.details dd {
    margin: 0;
    color: #1e395b;
}

/* notepad */
.notepad {
    left: 539px;
    right: 145px;
    top: 285px;
    bottom: 145px;
    padding: 0 8px 7px;
    border: 2px solid #dbe9f6;
    outline: 1px solid #26303a;
    background: linear-gradient(105deg, #d4e3f2, #b1cfeb 30%, #b1cfeb 80%, #cfe1f2);
    box-shadow: 2px 4px 16px 4px rgba(0, 0, 0, 0.75);
}
.notepad h2 {
    display: flex;
    align-items: center;
    gap: 5px;
    height: 40px;
    margin: 0;
    padding-bottom: 1px;
    font-size: 18px;
    font-weight: normal;
}
.notepad h2 span {
    text-shadow: 0 0 8px #fff, 0 0 12px #fff;
}
.notepad .caption {
    right: 6px;
    height: 27px;
    border-color: #3f4a56;
}
.notepad .caption button {
    border-color: #3f4a56;
    background: linear-gradient(#cfdbe8, #bccbdb 48%, #94abc3 50%, #abc0d5);
}
.notepad .caption .close {
    background: linear-gradient(#eaa69b, #df8576 48%, #c8432b 50%, #d37a5d);
    box-shadow: inset 0 0 0 1px #e8a394;
}
.menu {
    flex: none;
    height: 31px;
    display: flex;
    align-items: center;
    gap: 16px;
    padding-left: 6px;
    border-bottom: 2px solid #4c84b4;
    background: linear-gradient(#fff, #eef0f8 30%, #d4daed 35%, #e2e6f4);
}
.editor {
    flex: 1;
    min-height: 0;
    position: relative;
    display: grid;
    grid-template: 1fr 28px / 1fr 27px;
    background: #fff;
}
.editor textarea {
    border: 0;
    outline: 0;
    padding: 4px 2px;
    resize: none;
    overflow: hidden;
    background: #fff;
    font: 20px/26px "Liberation Mono", monospace;
}
.caret {
    position: absolute;
    left: 2px;
    top: 3px;
    width: 1px;
    height: 24px;
    background: #000;
}
.vscroll,
.hscroll,
.grip {
    display: flex;
    align-items: center;
    justify-content: space-between;
    background: #f0f0f0;
}
.vscroll {
    flex-direction: column;
    padding: 11px 0 9px;
}
.hscroll {
    padding: 0 11px 3px 9px;
    grid-row: 2;
}
.grip {
    align-items: flex-end;
    justify-content: flex-end;
    padding: 4px;
}
.pointer {
    position: absolute;
    left: 763px;
    top: 551px;
}
.langbar {
    position: absolute;
    right: 121px;
    bottom: 1px;
    width: 131px;
    height: 34px;
    display: flex;
    align-items: center;
    justify-content: space-between;
    padding: 0 5px 0 4px;
    background: linear-gradient(#c4c4c4, #6c6e70 30%, #4a4c4e 35%, #4a4c4e);
    font: 16px/24px "Liberation Serif", serif;
}

/* taskbar */
.taskbar {
    flex: none;
    height: 55px;
    display: flex;
    align-items: center;
    gap: 3px;
    padding-left: 11px;
    border-top: 1px solid #5d7186;
    box-shadow: inset 0 1px #d3e4f4;
    background: linear-gradient(90deg, #8ba1ba, #8ba1ba 90px, #b0cdea 120px);
}
.taskbar button {
    width: 75px;
    height: 54px;
    display: flex;
    align-items: center;
    justify-content: center;
}
.taskbar .orb {
    width: 52px;
    margin-right: 17px;
}
.taskbar .running {
    border: 1px solid #5e7690;
    border-radius: 4px;
    box-shadow: inset 0 0 0 1px #eef5fc;
    background: linear-gradient(135deg, #dce8f4, #c2d7ed);
}
.notify {
    margin-left: auto;
    display: flex;
    align-items: center;
    gap: 13px;
    height: 54px;
    padding-left: 46px;
    background: linear-gradient(90deg, #b0cdea, #8ba1ba 36px, #8ba1ba);
    color: #fff;
}
.notify svg:first-child {
    margin-right: 10px;
}
.notify time {
    font-size: 19px;
    line-height: 25px;
    text-align: center;
}
.taskbar .show-desktop {
    width: 14px;
    margin-left: -6px;
    border: 1px solid #5d7186;
    border-bottom: 0;
    background: linear-gradient(135deg, #d3dfea, #7e95ae);
}
```
